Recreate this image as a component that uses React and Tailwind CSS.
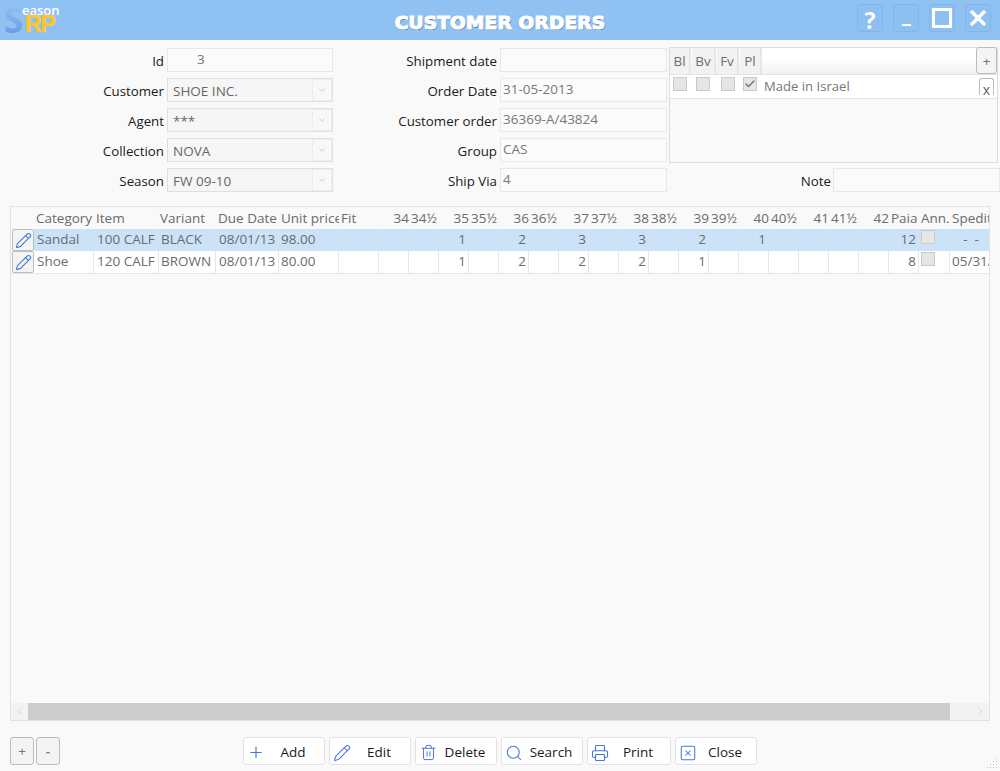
import { ChevronDown, ChevronLeft, ChevronRight, Pencil, Plus, Printer, Search, SquareX, Trash2, X, Check } from "lucide-react";

const font = "font-['Open_Sans',sans-serif]";
const gridCols = "grid-cols-[23px_60px_65px_57px_63px_60px_40px_repeat(17,30px)_30px_31px_40px]";

const sizes = ["34", "34½", "35", "35½", "36", "36½", "37", "37½", "38", "38½", "39", "39½", "40", "40½", "41", "41½", "42"];

const rows = [
  { cat: "Sandal", item: "100 CALF", variant: "BLACK", due: "08/01/13", price: "98.00", qty: { 2: 1, 4: 2, 6: 3, 8: 3, 10: 2, 12: 1 }, pairs: 12, sped: "-  -", selected: true },
  { cat: "Shoe", item: "120 CALF", variant: "BROWN", due: "08/01/13", price: "80.00", qty: { 2: 1, 4: 2, 6: 2, 8: 2, 10: 1 }, pairs: 8, sped: "05/31/13" },
];

function Field({ label, value, wide = "w-[167px]", pl = "pl-[2px]" }) {
  return (
    <div className="flex h-6 items-center">
      <div className="w-[164px] shrink-0 pt-[4px] text-right text-[13.3px] text-[#1a1a1a]">{label}</div>
      <div className={`ml-[3px] flex h-6 ${wide} items-center border border-[#e8e8e8] bg-[#fbfbfb] ${pl} pb-[2px] text-[13.5px] text-[#777]`}>{value}</div>
    </div>
  );
}

function SelectField({ label, value }) {
  return (
    <div className="flex h-6 items-center">
      <div className="w-[164px] shrink-0 pt-[4px] text-right text-[13.3px] text-[#1a1a1a]">{label}</div>
      <div className="ml-[3px] flex h-6 w-[166px] items-center justify-between border border-[#dfdfdf] bg-[#f6f6f6] pl-[5px] text-[13.5px] text-[#666]">
        <span className="pt-[3px]">{value}</span>
        <span className="flex h-[22px] w-5 items-center justify-center rounded-[2px] border border-[#eeeeee] bg-[#f8f8f8]">
          <ChevronDown size={10} className="text-[#c4c4c4]" />
        </span>
      </div>
    </div>
  );
}

function Checkbox({ checked }) {
  return (
    <span className="flex h-[14px] w-[14px] items-center justify-center border border-[#c9c9c9] bg-[#e6e6e6]">
      {checked && <Check size={12} strokeWidth={3} className="text-[#777]" />}
    </span>
  );
}

function GridRow({ row }) {
  const bg = row.selected ? "bg-[#cbe3f8]" : "bg-white";
  const line = row.selected ? "border-[#dde1e5]" : "border-[#e6e6e6]";
  const cell = `overflow-hidden whitespace-nowrap border-r ${line} leading-[20px]`;
  return (
    <div className={`grid ${gridCols} h-[22px] text-[13.5px] text-[#6b6b6b]`}>
      <div className="ml-px flex h-[22px] items-center justify-center rounded-[2px] border border-[#bdbdbd] bg-[#f4f4f4]">
        <Pencil size={17} strokeWidth={1.5} className="text-[#3f74dd]" />
      </div>
      <div className={`${bg} ${cell} pl-[3px]`}>{row.cat}</div>
      <div className={`${bg} ${cell} pl-[3px]`}>{row.item}</div>
      <div className={`${bg} ${cell} pl-[2px]`}>{row.variant}</div>
      <div className={`${bg} ${cell} pl-[3px]`}>{row.due}</div>
      <div className={`${bg} ${cell} pl-[2px]`}>{row.price}</div>
      <div className={`${bg} ${cell}`}></div>
      {sizes.map((s, i) => (
        <div key={s} className={`${bg} border-r ${line} pr-[2px] text-right leading-[20px]`}>{row.qty[i]}</div>
      ))}
      <div className={`${bg} border-r ${line} pr-[2px] text-right leading-[20px]`}>{row.pairs}</div>
      <div className={`${bg} border-r ${line} pl-[2px] pt-px`}><Checkbox /></div>
      <div className={`${bg} overflow-hidden whitespace-pre pl-[2px] leading-[20px] ${row.selected ? "text-center" : ""}`}>{row.sped}</div>
    </div>
  );
}

function ActionButton({ icon, label, wide }) {
  return (
    <button type="button" className={`flex h-[28px] ${wide ? "w-[84px]" : "w-[82px]"} items-center rounded-[3px] border border-[#e3e3e3] bg-white pl-[3px] pr-[3px] pt-[3px] text-[13.5px] text-[#1a1a1a]`}>
      <span className="flex w-[18px] justify-center text-[#4a76dc]">{icon}</span>
      <span className="flex-1 text-center">{label}</span>
    </button>
  );
}

function WinButton({ children }) {
  return (
    <button type="button" className="flex h-7 w-[26px] items-center justify-center rounded-[3px] border border-[#82b6ea] bg-[#8ebff1] text-white">
      {children}
    </button>
  );
}

function Logo() {
  return (
    <svg width="62" height="36" viewBox="0 0 62 36" className="ml-[4px] self-start">
      <defs>
        <linearGradient id="logoS" x1="0" y1="0" x2="0" y2="1">
          <stop offset="0" stopColor="#a9caf7" />
          <stop offset="1" stopColor="#5a8ee2" />
        </linearGradient>
      </defs>
      <text x="0" y="33" fontFamily="Open Sans, sans-serif" fontSize="35" fontWeight="700" fill="url(#logoS)">S</text>
      <text x="18" y="15" fontFamily="Open Sans, sans-serif" fontSize="13" fontWeight="600" fill="#ffffff">eason</text>
      <text x="21" y="32" fontFamily="Liberation Sans, sans-serif" fontWeight="700" fontSize="23" fill="#fdc630" stroke="#fdc630" strokeWidth="0.5" letterSpacing="-1">RP</text>
    </svg>
  );
}

export default function App() {
  return (
    <div className={`${font} relative flex h-[771px] w-[1000px] flex-col overflow-hidden bg-[#f9f9f9]`}>
      {/* title bar */}
      <div className="grid h-10 shrink-0 grid-cols-[1fr_auto_1fr] items-center bg-[#8fc2f3]">
        <Logo />
        <div className="pt-[6px] font-['DejaVu_Sans',sans-serif] text-[18.5px] font-bold leading-none tracking-[0.2px] text-white [-webkit-text-stroke:1.2px_white] [text-shadow:1px_1px_0_#3f6fa6,0_1px_0_#3f6fa6]">
          CUSTOMER ORDERS
        </div>
        <div className="flex justify-end gap-[10px] self-start pr-[9px] pt-1">
          <WinButton><span className="pt-1 text-[23px] font-bold leading-none">?</span></WinButton>
          <WinButton><span className="mt-[14px] h-[2px] w-[9px] bg-white"></span></WinButton>
          <WinButton><span className="h-5 w-5 border-[3px] border-white"></span></WinButton>
          <WinButton><X size={26} strokeWidth={3.5} /></WinButton>
        </div>
      </div>

      {/* form */}
      <div className="flex pt-2">
        <div className="flex w-[333px] flex-col gap-[6px]">
          <Field label="Id" wide="w-[166px]" value={<span className="pl-[27px]">3</span>} />
          <SelectField label="Customer" value="SHOE INC." />
          <SelectField label="Agent" value="***" />
          <SelectField label="Collection" value="NOVA" />
          <SelectField label="Season" value="FW 09-10" />
        </div>
        <div className="flex w-[336px] flex-col gap-[6px]">
          <Field label="Shipment date" value="" />
          <Field label="Order Date" value="31-05-2013" />
          <Field label="Customer order" value="36369-A/43824" />
          <Field label="Group" value="CAS" />
          <Field label="Ship Via" value="4" />
        </div>
        <div className="flex w-[331px] flex-col">
          <div className="-mt-px flex h-[116px] w-[329px] flex-col border border-[#dcdcdc]">
            <div className="flex h-[27px] shrink-0 border-b border-[#e3e3e3] bg-gradient-to-b from-white from-40% to-[#f0f0f0] text-[13.5px] text-[#6f6f6f]">
              <span className="w-[21px] border-r-2 border-[#e6e6e6] bg-[#f2f2f2] text-center leading-[26px]">Bl</span>
              <span className="ml-px w-[24px] border-r-2 border-[#e6e6e6] bg-[#f2f2f2] text-center leading-[26px]">Bv</span>
              <span className="ml-px w-[22px] border-r-2 border-[#e6e6e6] bg-[#f2f2f2] text-center leading-[26px]">Fv</span>
              <span className="ml-px w-[22px] border-r-2 border-[#e6e6e6] bg-[#f2f2f2] text-center leading-[26px]">Pl</span>
              <span className="flex-1"></span>
              <span className="-mt-px h-[27px] w-[21px] rounded-[3px] border border-[#bcbcbc] bg-[#f4f4f4] text-center leading-[26px]">+</span>
            </div>
            <div className="flex h-[24px] shrink-0 border-b border-[#e3e3e3] bg-white">
              <div className="flex w-[94px] pt-[2px] pl-[3px]">
                <Checkbox />
                <span className="ml-[9px]"><Checkbox /></span>
                <span className="ml-[11px]"><Checkbox /></span>
                <span className="ml-2"><Checkbox checked /></span>
              </div>
              <span className="text-[13.1px] leading-[22px] text-[#777]">Made in Israel</span>
              <span className="ml-auto mr-[3px] mt-[3px] h-[17px] w-[15px] overflow-hidden rounded-t-[3px] border border-b-0 border-[#bcbcbc] text-center text-[14px] leading-[22px] text-[#666]">x</span>
            </div>
          </div>
          <div className="mt-[5px] flex h-6 items-center">
            <div className="w-[162px] pt-[4px] text-right text-[13.3px] text-[#1a1a1a]">Note</div>
            <div className="ml-[2px] h-6 flex-1 border border-[#e8e8e8] bg-[#fbfbfb]"></div>
          </div>
        </div>
      </div>

      {/* grid */}
      <div className="mx-[10px] mt-[14px] flex h-[515px] w-[980px] flex-col overflow-hidden border border-[#e3e3e3]">
        <div className={`grid ${gridCols} h-[22px] shrink-0 text-[13.5px] leading-[23px] text-[#6b6b6b]`}>
          <div></div>
          <div className="pl-[2px]">Category</div>
          <div className="pl-[2px]">Item</div>
          <div className="pl-px">Variant</div>
          <div className="pl-[2px]">Due Date</div>
          <div className="overflow-hidden whitespace-nowrap pl-[2px]">Unit price</div>
          <div className="pl-[2px]">Fit</div>
          {sizes.map((s) => (
            <div key={s} className={s.includes("½") ? "text-left pl-[2px]" : "text-right"}>{s}</div>
          ))}
          <div className="pl-[2px]">Paia</div>
          <div className="pl-[2px]">Ann.</div>
          <div className="overflow-hidden whitespace-nowrap pl-[2px]">Spedition</div>
        </div>
        {rows.map((r) => (
          <GridRow key={r.cat} row={r} />
        ))}
        <div className="h-px w-full bg-[#e6e6e6]"></div>
        <div className="flex-1"></div>
        <div className="flex h-[17px] shrink-0 bg-[#f2f2f2]">
          <span className="flex w-[17px] items-center justify-center"><ChevronLeft size={11} className="text-[#cfcfcf]" /></span>
          <span className="h-full w-[922px] bg-[#cccccc]"></span>
          <span className="flex flex-1 items-center justify-end pr-[3px]"><ChevronRight size={11} className="text-[#cfcfcf]" /></span>
        </div>
      </div>

      {/* footer */}
      <div className="mt-[16px] flex pl-[10px]">
        <div className="flex gap-[2px] text-[13.5px] text-[#777]">
          <button type="button" className="h-7 w-6 rounded-[3px] border border-[#bcbcbc] bg-[#f4f4f4]">+</button>
          <button type="button" className="h-7 w-6 rounded-[3px] border border-[#bcbcbc] bg-[#f4f4f4] font-semibold">-</button>
        </div>
        <div className="ml-[183px] flex gap-1">
          <ActionButton icon={<Plus size={19} strokeWidth={1.5} />} label="Add" />
          <ActionButton icon={<Pencil size={18} strokeWidth={1.4} />} label="Edit" />
          <ActionButton icon={<Trash2 size={17} strokeWidth={1.4} />} label="Delete" />
          <ActionButton icon={<Search size={18} strokeWidth={1.4} />} label="Search" />
          <ActionButton icon={<Printer size={20} strokeWidth={1.5} />} label="Print" wide />
          <ActionButton icon={<SquareX size={20} strokeWidth={1.4} />} label="Close" />
        </div>
      </div>

      {/* resize grip */}
      <svg width="12" height="12" viewBox="0 0 12 12" className="absolute bottom-px right-px text-[#c9c9c9]" fill="currentColor">
        <rect x="9" y="0" width="1" height="1" />
        <rect x="6" y="3" width="1" height="1" /><rect x="9" y="3" width="1" height="1" />
        <rect x="3" y="6" width="1" height="1" /><rect x="6" y="6" width="1" height="1" /><rect x="9" y="6" width="1" height="1" />
        <rect x="0" y="9" width="1" height="1" /><rect x="3" y="9" width="1" height="1" /><rect x="6" y="9" width="1" height="1" /><rect x="9" y="9" width="1" height="1" />
      </svg>
    </div>
  );
}
